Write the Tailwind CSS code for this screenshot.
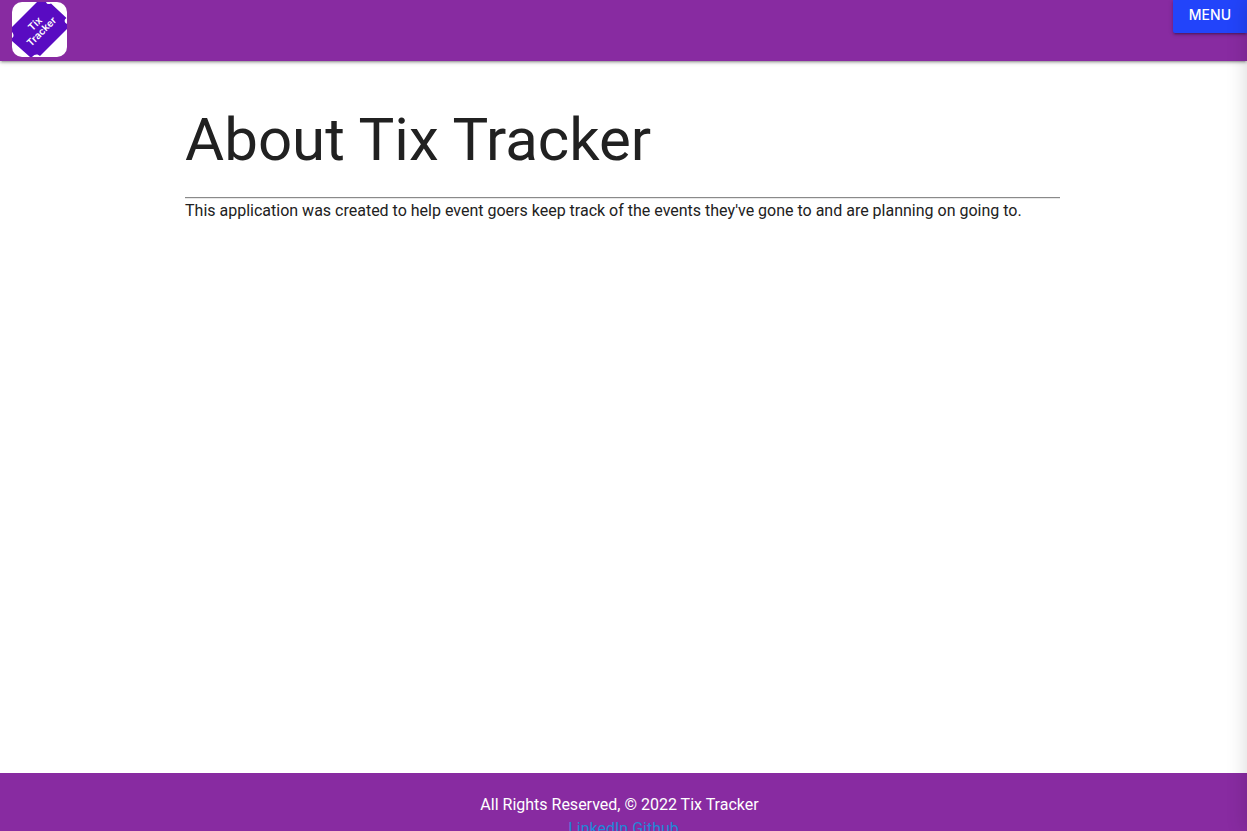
<!DOCTYPE html>
<html lang="en">
<head>
<meta charset="utf-8">
<meta name="viewport" content="width=device-width, initial-scale=1">
<title>Tix Tracker</title>
<script src="https://cdn.jsdelivr.net/npm/@tailwindcss/browser@4"></script>
</head>
<body class="flex h-screen flex-col overflow-hidden bg-white font-[Roboto,sans-serif] text-base leading-6 text-[#212121]">
<header class="z-10 flex h-[61px] shrink-0 items-start justify-between bg-[#882ba1] pl-3 shadow-[0_2px_2px_0_rgba(0,0,0,0.14),0_3px_1px_-2px_rgba(0,0,0,0.12),0_1px_5px_0_rgba(0,0,0,0.2)]">
  <a href="#" aria-label="Tix Tracker home" class="mt-[2px] block size-[55px] overflow-hidden rounded-[10px] bg-white">
    <svg viewBox="0 0 55 55" class="size-full" role="img">
      <path fill="#590bc2" d="M25 0H34C35 2.500 37 2.500 39 1.500L54.500 16C52 17.500 52 20.500 55 22V27L28 54C26 52 23 51.500 20 55H18L0 39V36C2 35 2 32 0 30V25Z"/>
      <g fill="#fff" font-family="Inter, sans-serif" font-size="10" font-weight="600" text-anchor="middle" transform="rotate(-45 27 27)">
        <text x="28" y="24">Tix</text>
        <text x="27" y="34">Tracker</text>
      </g>
    </svg>
  </a>
  <button type="button" class="h-[33px] rounded-bl-xs bg-[#2244fa] px-4 pb-[3px] font-[Inter,sans-serif] text-sm font-medium text-white shadow-[0_2px_2px_0_rgba(0,0,0,0.14),0_3px_1px_-2px_rgba(0,0,0,0.12),0_1px_5px_0_rgba(0,0,0,0.2)]">MENU</button>
</header>
<main class="mx-auto w-[70%] flex-1 pr-[2px] pt-[42px]">
  <div class="-mx-[2px]">
    <h1 class="text-[60px] leading-[74px]">About Tix Tracker</h1>
    <hr class="mt-5 h-[2px] border-t border-b border-t-[#8a8a8a] border-b-[#e8e8e8]">
    <p>This application was created to help event goers keep track of the events they've gone to and are planning on going to.</p>
  </div>
</main>
<footer class="h-[58px] shrink-0 overflow-hidden bg-[#882ba1] pt-5 text-center">
  <p class="pr-2 text-white">All Rights Reserved, © 2022 Tix Tracker</p>
  <p class="text-[#1e88d8]"><a href="#">LinkedIn</a> <a href="#">Github</a></p>
</footer>
<aside aria-label="Menu panel" class="fixed inset-y-0 left-full z-20 w-[300px] bg-white shadow-[0_0_20px_0_rgba(0,0,0,0.16)]"></aside>
</body>
</html>
